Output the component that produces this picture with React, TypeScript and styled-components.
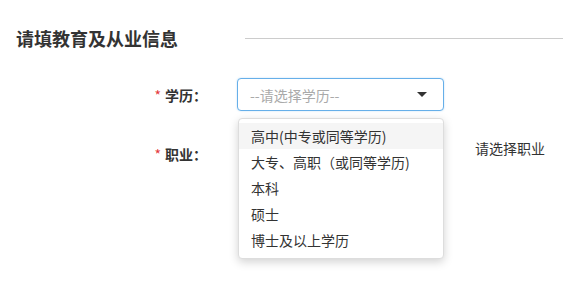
import React from "react";
import styled, { createGlobalStyle } from "styled-components";

const GlobalStyle = createGlobalStyle`
  html, body {
    margin: 0;
    padding: 0;
    background: #ffffff;
    font-family: "Noto Sans CJK SC", "Noto Sans", "Liberation Sans", sans-serif;
    color: #333333;
  }
`;

const Page = styled("div")`
  width: 564px;
  height: 281px;
  box-sizing: border-box;
  padding-top: 26px;
  overflow: hidden;
`;

const Header = styled("div")`
  display: flex;
  align-items: center;
  padding-left: 16px;
  height: 24px;
`;

const Title = styled("div")`
  width: 229px;
  font-size: 18px;
  line-height: 24px;
  font-weight: 700;
  color: #333333;
`;

const Rule = styled("div")`
  flex: 1;
  height: 1px;
  margin-right: 1px;
  background-color: #cccccc;
`;

const Form = styled("div")`
  margin-top: 28px;
  display: flex;
  flex-direction: column;
  gap: 26px;
`;

const Row = styled("div")`
  display: flex;
  align-items: center;
  height: 33px;
`;

const Label = styled("div")`
  width: 207px;
  margin-right: 30px;
  text-align: right;
  font-size: 14px;
  font-weight: 700;
  color: #333333;
  white-space: nowrap;
`;

const Star = styled("span")`
  color: #e4393c;
  font-weight: 400;
  margin-right: 4px;
`;

const SelectWrap = styled("div")`
  position: relative;
  width: 207px;
  height: 33px;
`;

const SelectBox = styled("div")`
  width: 100%;
  height: 100%;
  box-sizing: border-box;
  border: 1px solid #66afe9;
  border-radius: 4px;
  padding: 0 16px 0 12px;
  display: flex;
  align-items: center;
  justify-content: space-between;
  background: #ffffff;
  box-shadow: 0 0 2px rgba(102, 175, 233, 0.4);
`;

const Placeholder = styled("span")`
  font-size: 14px;
  color: #aaaaaa;
`;

const Caret = styled("span")`
  width: 0;
  height: 0;
  border-left: 5px solid transparent;
  border-right: 5px solid transparent;
  border-top: 5px solid #333333;
`;

const Menu = styled("ul")`
  position: absolute;
  top: 40px;
  left: 1px;
  width: 206px;
  box-sizing: border-box;
  margin: 0;
  padding: 4px 0 5px;
  list-style: none;
  background: #ffffff;
  border: 1px solid #dddddd;
  border-radius: 4px;
  box-shadow: 0 3px 10px rgba(0, 0, 0, 0.18);
  z-index: 2;
`;

const MenuItem = styled("li")<{ $active?: boolean }>`
  height: 26px;
  line-height: 26px;
  padding-left: 12px;
  font-size: 14px;
  color: #333333;
  white-space: nowrap;
  background-color: ${(p) => (p.$active ? "#f5f5f5" : "transparent")};
`;

const JobValue = styled("div")`
  flex: 1;
  text-align: right;
  padding-right: 19px;
  margin-top: -12px;
  font-size: 14px;
  color: #333333;
`;

const degrees = [
  "高中(中专或同等学历)",
  "大专、高职（或同等学历)",
  "本科",
  "硕士",
  "博士及以上学历",
];

export default function App() {
  return (
    <Page>
      <GlobalStyle />
      <Header>
        <Title>请填教育及从业信息</Title>
        <Rule />
      </Header>

      <Form>
        <Row>
          <Label>
            <Star>*</Star>学历：
          </Label>
          <SelectWrap>
            <SelectBox>
              <Placeholder>--请选择学历--</Placeholder>
              <Caret />
            </SelectBox>
            <Menu>
              {degrees.map((d, i) => (
                <MenuItem key={d} $active={i === 0}>
                  {d}
                </MenuItem>
              ))}
            </Menu>
          </SelectWrap>
        </Row>

        <Row>
          <Label>
            <Star>*</Star>职业：
          </Label>
          <JobValue>请选择职业</JobValue>
        </Row>
      </Form>
    </Page>
  );
}
